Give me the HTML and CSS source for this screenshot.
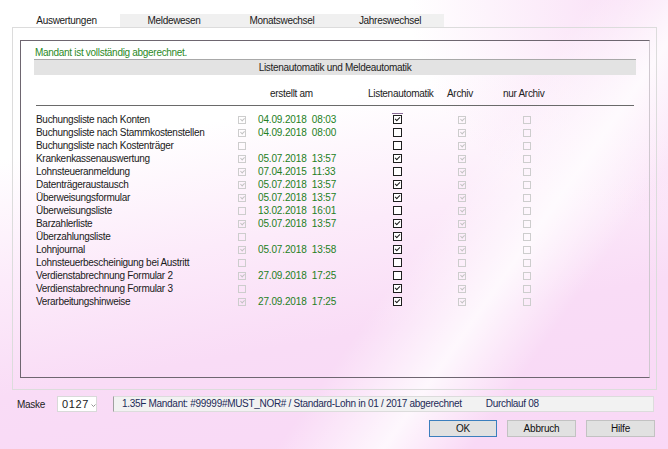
FILE: index.html
```html
<!DOCTYPE html>
<html lang="de">
<head>
  <meta charset="UTF-8">
  <title>Auswertungen</title>
  <link rel="stylesheet" href="styles.css">
</head>
<body>
  <div class="window">

    <div class="tabs">
      <div class="tab active">Auswertungen</div>
      <div class="tab">Meldewesen</div>
      <div class="tab">Monatswechsel</div>
      <div class="tab">Jahreswechsel</div>
    </div>

    <div class="panel">
      <div class="group">
        <p class="status-ok">Mandant ist vollständig abgerechnet.</p>
        <div class="section-bar">Listenautomatik und Meldeautomatik</div>

        <div class="col-head">
          <span></span>
          <span>erstellt am</span>
          <span>Listenautomatik</span>
          <span>Archiv</span>
          <span>nur Archiv</span>
        </div>

        <div class="rows">
          <div class="row">
            <span class="name">Buchungsliste nach Konten</span>
            <span class="cell"><span class="cb dis on"></span></span>
            <span class="date">04.09.2018&nbsp;&nbsp;08:03</span>
            <span class="cell"><span class="cb on focus"></span></span>
            <span class="cell"><span class="cb dis on"></span></span>
            <span class="cell"><span class="cb dis"></span></span>
          </div>
          <div class="row">
            <span class="name">Buchungsliste nach Stammkostenstellen</span>
            <span class="cell"><span class="cb dis on"></span></span>
            <span class="date">04.09.2018&nbsp;&nbsp;08:00</span>
            <span class="cell"><span class="cb"></span></span>
            <span class="cell"><span class="cb dis on"></span></span>
            <span class="cell"><span class="cb dis"></span></span>
          </div>
          <div class="row">
            <span class="name">Buchungsliste nach Kostenträger</span>
            <span class="cell"><span class="cb dis"></span></span>
            <span class="date"></span>
            <span class="cell"><span class="cb"></span></span>
            <span class="cell"><span class="cb dis on"></span></span>
            <span class="cell"><span class="cb dis"></span></span>
          </div>
          <div class="row">
            <span class="name">Krankenkassenauswertung</span>
            <span class="cell"><span class="cb dis on"></span></span>
            <span class="date">05.07.2018&nbsp;&nbsp;13:57</span>
            <span class="cell"><span class="cb on"></span></span>
            <span class="cell"><span class="cb dis on"></span></span>
            <span class="cell"><span class="cb dis"></span></span>
          </div>
          <div class="row">
            <span class="name">Lohnsteueranmeldung</span>
            <span class="cell"><span class="cb dis on"></span></span>
            <span class="date">07.04.2015&nbsp;&nbsp;11:33</span>
            <span class="cell"><span class="cb"></span></span>
            <span class="cell"><span class="cb dis on"></span></span>
            <span class="cell"><span class="cb dis"></span></span>
          </div>
          <div class="row">
            <span class="name">Datenträgeraustausch</span>
            <span class="cell"><span class="cb dis on"></span></span>
            <span class="date">05.07.2018&nbsp;&nbsp;13:57</span>
            <span class="cell"><span class="cb on"></span></span>
            <span class="cell"><span class="cb dis on"></span></span>
            <span class="cell"><span class="cb dis"></span></span>
          </div>
          <div class="row">
            <span class="name">Überweisungsformular</span>
            <span class="cell"><span class="cb dis on"></span></span>
            <span class="date">05.07.2018&nbsp;&nbsp;13:57</span>
            <span class="cell"><span class="cb on"></span></span>
            <span class="cell"><span class="cb dis on"></span></span>
            <span class="cell"><span class="cb dis"></span></span>
          </div>
          <div class="row">
            <span class="name">Überweisungsliste</span>
            <span class="cell"><span class="cb dis"></span></span>
            <span class="date">13.02.2018&nbsp;&nbsp;16:01</span>
            <span class="cell"><span class="cb"></span></span>
            <span class="cell"><span class="cb dis on"></span></span>
            <span class="cell"><span class="cb dis"></span></span>
          </div>
          <div class="row">
            <span class="name">Barzahlerliste</span>
            <span class="cell"><span class="cb dis on"></span></span>
            <span class="date">05.07.2018&nbsp;&nbsp;13:57</span>
            <span class="cell"><span class="cb on"></span></span>
            <span class="cell"><span class="cb dis on"></span></span>
            <span class="cell"><span class="cb dis"></span></span>
          </div>
          <div class="row">
            <span class="name">Überzahlungsliste</span>
            <span class="cell"><span class="cb dis"></span></span>
            <span class="date"></span>
            <span class="cell"><span class="cb on"></span></span>
            <span class="cell"><span class="cb dis on"></span></span>
            <span class="cell"><span class="cb dis"></span></span>
          </div>
          <div class="row">
            <span class="name">Lohnjournal</span>
            <span class="cell"><span class="cb dis on"></span></span>
            <span class="date">05.07.2018&nbsp;&nbsp;13:58</span>
            <span class="cell"><span class="cb on"></span></span>
            <span class="cell"><span class="cb dis on"></span></span>
            <span class="cell"><span class="cb dis"></span></span>
          </div>
          <div class="row">
            <span class="name">Lohnsteuerbescheinigung bei Austritt</span>
            <span class="cell"><span class="cb dis"></span></span>
            <span class="date"></span>
            <span class="cell"><span class="cb"></span></span>
            <span class="cell"><span class="cb dis"></span></span>
            <span class="cell"><span class="cb dis"></span></span>
          </div>
          <div class="row">
            <span class="name">Verdienstabrechnung Formular 2</span>
            <span class="cell"><span class="cb dis on"></span></span>
            <span class="date">27.09.2018&nbsp;&nbsp;17:25</span>
            <span class="cell"><span class="cb"></span></span>
            <span class="cell"><span class="cb dis on"></span></span>
            <span class="cell"><span class="cb dis"></span></span>
          </div>
          <div class="row">
            <span class="name">Verdienstabrechnung Formular 3</span>
            <span class="cell"><span class="cb dis"></span></span>
            <span class="date"></span>
            <span class="cell"><span class="cb on"></span></span>
            <span class="cell"><span class="cb dis on"></span></span>
            <span class="cell"><span class="cb dis"></span></span>
          </div>
          <div class="row">
            <span class="name">Verarbeitungshinweise</span>
            <span class="cell"><span class="cb dis on"></span></span>
            <span class="date">27.09.2018&nbsp;&nbsp;17:25</span>
            <span class="cell"><span class="cb on"></span></span>
            <span class="cell"><span class="cb dis on"></span></span>
            <span class="cell"><span class="cb dis"></span></span>
          </div>
        </div>
      </div>
    </div>

    <div class="footer">
      <span class="label">Maske</span>
      <div class="select">
        <span>0127</span>
        <svg class="chev" width="5" height="3" viewBox="0 0 5 3"><path d="M0.5 0.5 L2.5 2.5 L4.5 0.5" fill="none" stroke="#777" stroke-width="0.8"/></svg>
      </div>
      <div class="info">
        <span>1.35F Mandant: #99999#MUST_NOR# / Standard-Lohn in 01 / 2017 abgerechnet</span>
        <span class="run">Durchlauf 08</span>
      </div>
    </div>

    <div class="buttons">
      <button class="btn default">OK</button>
      <button class="btn">Abbruch</button>
      <button class="btn">Hilfe</button>
    </div>

  </div>
</body>
</html>
```

FILE: styles.css
```css
* {
  margin: 0;
  padding: 0;
  box-sizing: border-box;
}

html, body {
  width: 668px;
  height: 449px;
  overflow: hidden;
}

body {
  font-family: "Liberation Sans", Arial, sans-serif;
  font-size: 10px;
  letter-spacing: -0.3px;
  color: #1a1a1a;
  background:
    linear-gradient(125deg, rgba(255,255,255,0) 60%, rgba(255,255,255,0.8) 71%, rgba(255,255,255,0) 80%),
    radial-gradient(ellipse 260px 220px at 100% 0%, rgba(248,214,244,0.9), rgba(248,214,244,0) 100%),
    linear-gradient(170deg, #ffffff 0%, #ffffff 28%, #fcebfa 50%, #f9dcf6 70%, #f9d8f6 100%);
}

.window {
  height: 100%;
  padding: 14px 11px 0 12px;
  display: flex;
  flex-direction: column;
}

/* tabs */
.tabs {
  display: flex;
  height: 14px;
  margin-left: 1px;
  margin-bottom: -1px;
}

.tab {
  width: 108px;
  line-height: 14px;
  text-align: center;
  background-color: #f0f0f0;
  border-bottom: 1px solid #dcdcdc;
}

.tab.active {
  width: 107px;
  background-color: #fff;
  border-bottom-color: #fff;
}

.panel {
  height: 363px;
  border: 1px solid #dcdcdc;
  padding: 12px 6px 11px 7px;
}

.group {
  height: 338px;
  border: 1px solid #6e6670;
  border-right-color: #cfc8cf;
  padding: 6px 0 0 13px;
}

.status-ok {
  color: #2a8a26;
  line-height: 12px;
  margin-left: 1px;
}

.section-bar {
  width: 602px;
  height: 16px;
  line-height: 15px;
  background-color: #e3e3e3;
  border-top: 1px solid #a8a8a8;
  text-align: center;
  color: #222;
}

.col-head {
  display: grid;
  grid-template-columns: 234px 98px 79px 56px 1fr;
  width: 598px;
  height: 19px;
  margin: 12px 0 0 2px;
  line-height: 12px;
  padding-top: 1px;
  border-bottom: 1px solid #6a6a6a;
  color: #222;
}

.rows {
  margin: 7px 0 0 2px;
}

.row {
  display: grid;
  grid-template-columns: 201px 10px 131px 38px 92px 38px;
  height: 13px;
  line-height: 13px;
  align-items: center;
}

.cell {
  display: flex;
  justify-content: center;
  align-items: center;
}

.date {
  padding-left: 11px;
  letter-spacing: -0.15px;
  color: #237f22;
}

/* checkboxes */
.cb {
  position: relative;
  width: 9px;
  height: 9px;
  border: 1px solid #1e1e1e;
  background: #fff;
}

.cb.on::after {
  content: '';
  position: absolute;
  left: 2px;
  top: 0;
  width: 2px;
  height: 4px;
  border: solid #1e1e1e;
  border-width: 0 1px 1px 0;
  transform: rotate(45deg);
}

.cb.dis {
  width: 8px;
  height: 8px;
  border-color: #cdcdcd;
  background: transparent;
}

.cb.dis.on::after {
  left: 2px;
  top: 0;
  height: 3px;
  border-color: #c2c2c2;
}

.cb.focus::before {
  content: '';
  position: absolute;
  left: -2px;
  right: -2px;
  top: -3px;
  height: 1px;
  background: #8a6c96;
}

/* footer */
.footer {
  display: flex;
  align-items: center;
  height: 16px;
  margin-top: 6px;
  padding-left: 5px;
}

.label {
  width: 40px;
  color: #222;
}

.select {
  width: 40px;
  height: 16px;
  border: 1px solid #d9d9d9;
  background: #fff;
  font-size: 11px;
  line-height: 14px;
  padding-left: 4px;
  letter-spacing: 0.6px;
  color: #222;
  display: flex;
  align-items: center;
}

.chev {
  margin-left: 2px;
  margin-top: 2px;
}

.info {
  width: 541px;
  height: 16px;
  margin-left: 16px;
  border: 1px solid #dcdcdc;
  border-left-color: #a0a0a0;
  background: #f2f2f2;
  line-height: 14px;
  padding-left: 8px;
  color: #1d2b58;
  display: flex;
}

.run {
  margin-left: 24px;
}

/* buttons */
.buttons {
  display: flex;
  justify-content: flex-end;
  gap: 10px;
  margin-top: 8px;
  padding-right: 2px;
}

.btn {
  width: 69px;
  height: 17px;
  font-family: "Liberation Sans", Arial, sans-serif;
  font-size: 10px;
  letter-spacing: -0.2px;
  color: #111;
  background: #e1e1e1;
  border: 1px solid #c2c2c2;
}

.btn.default {
  width: 68px;
  border-color: #3b7ebd;
}
```
